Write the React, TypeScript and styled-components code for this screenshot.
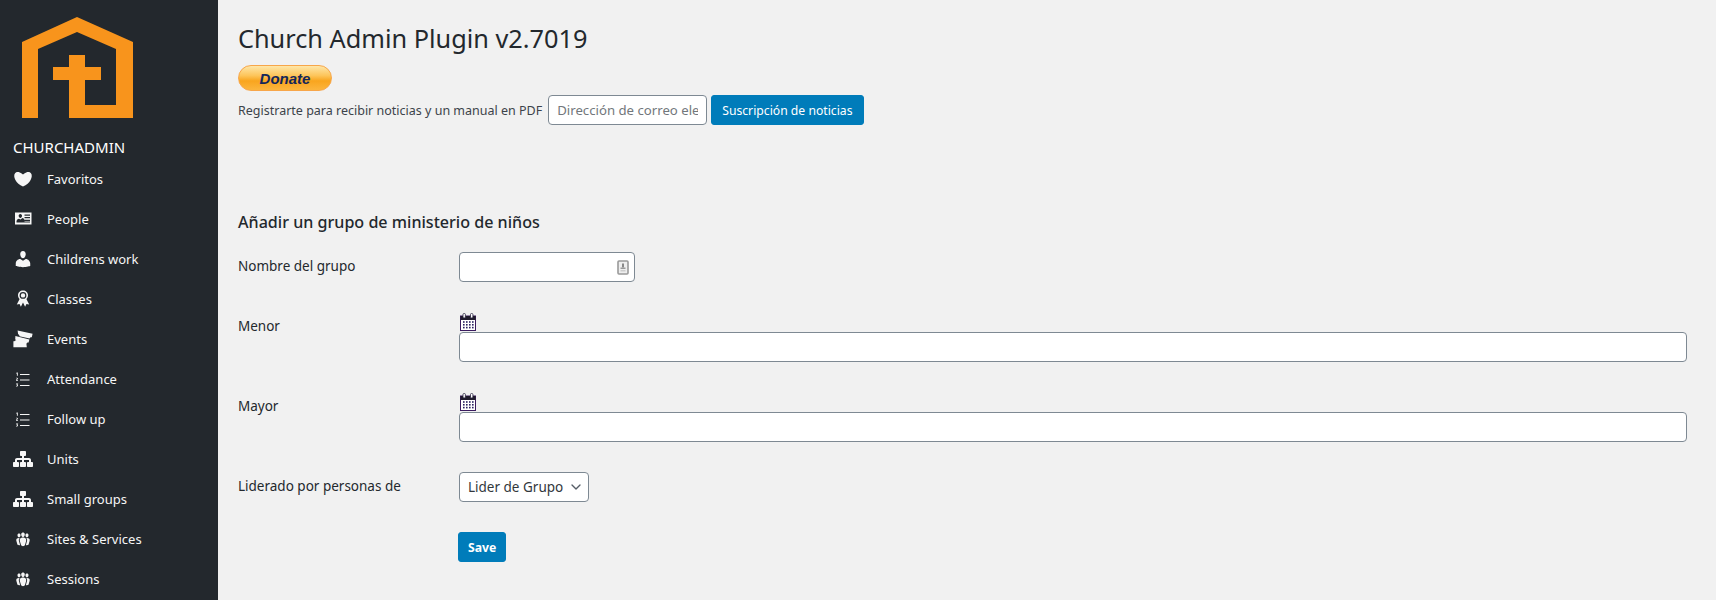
import * as React from "react";
import styled, { createGlobalStyle } from "styled-components";
import { ChevronDown } from "lucide-react";

const GlobalStyle = createGlobalStyle`
  html, body {
    margin: 0;
    height: 600px;
    overflow: hidden;
    background: #f1f1f1;
    font-family: "Noto Sans", "Open Sans", sans-serif;
    color: #23282d;
  }
`;

const Page = styled.div`
  display: flex;
  width: 1716px;
  height: 600px;
  overflow: hidden;
`;

const Sidebar = styled.nav`
  flex: 0 0 218px;
  background: #23282d;
  color: #fff;
  padding-top: 17px;
  box-sizing: border-box;
`;

const Logo = styled.svg`
  display: block;
  width: 111px;
  height: 101px;
  margin-left: 22px;
`;

const Brand = styled.div`
  margin: 19px 0 2px 13px;
  font-size: 15px;
  line-height: 20px;
`;

const Menu = styled.ul`
  list-style: none;
  margin: 0;
  padding: 0;
`;

const MenuItem = styled.li`
  display: flex;
  align-items: center;
  gap: 14px;
  height: 40px;
  padding-left: 13px;
  font-size: 13px;
  color: #f6f6f6;
`;

const MenuIcon = styled.svg`
  flex: 0 0 20px;
  width: 20px;
  height: 20px;
  fill: #f6f6f6;
`;

const Main = styled.main`
  flex: 1;
  padding: 20px 29px 0 20px;
  min-width: 0;
`;

const Title = styled.h1`
  margin: 0 0 9px;
  font-size: 25.3px;
  font-weight: 400;
  line-height: 36px;
`;

const Donate = styled.button`
  display: block;
  width: 94px;
  height: 26px;
  padding: 0;
  border: 1px solid #f7a64a;
  border-radius: 13px;
  background: linear-gradient(#fee6a8 0%, #fdc55a 40%, #f9a51e 62%, #fcb53e 100%);
  color: #14275a;
  font-family: "Liberation Sans", Arial, sans-serif;
  font-size: 15px;
  font-style: italic;
  font-weight: 700;
`;

const Newsletter = styled.div`
  display: flex;
  align-items: center;
  gap: 4px;
  margin-top: 4px;
  font-size: 12.5px;
  color: #3c434a;
`;

const baseField = `
  box-sizing: border-box;
  height: 30px;
  border: 1px solid #7e8993;
  border-radius: 4px;
  background: #fff;
  font-family: inherit;
  font-size: 13.5px;
  color: #32373c;
`;

const EmailInput = styled.input`
  ${baseField}
  width: 159px;
  padding: 0 8px;
  margin-left: 2px;
  font-size: 13.2px;
  &::placeholder {
    color: #72777c;
    opacity: 1;
  }
`;

const PrimaryButton = styled.button<{ $bold?: boolean }>`
  height: 30px;
  padding: 0 ${(p) => (p.$bold ? 9 : 10)}px;
  border: 1px solid #007cba;
  border-radius: 3px;
  background: #007cba;
  color: #fff;
  font-family: inherit;
  font-size: 12.2px;
  font-weight: ${(p) => (p.$bold ? 700 : 400)};
`;

const Heading = styled.h2`
  margin: 87px 0 20px;
  font-size: 16.1px;
  font-weight: 500;
  line-height: 20px;
`;

const Row = styled.div`
  display: grid;
  grid-template-columns: 221px 1fr;
  align-items: start;
  margin-bottom: 30px;
`;

const Label = styled.label`
  padding-top: 4px;
  font-size: 13.5px;
  line-height: 20px;
`;

const FieldWrap = styled.div<{ $width?: number }>`
  position: relative;
  width: ${(p) => (p.$width ? `${p.$width}px` : "100%")};
`;

const TextInput = styled.input`
  ${baseField}
  display: block;
  width: 100%;
  padding: 0 8px;
`;

const KeyIcon = styled.svg`
  position: absolute;
  top: 8px;
  right: 6px;
  width: 12px;
  height: 15px;
`;

const CalendarBox = styled.div`
  height: 20px;
  padding-top: 1px;
  box-sizing: border-box;
`;

const Calendar = styled.svg`
  display: block;
  width: 17px;
  height: 18px;
  margin-left: 1px;
`;

const Select = styled.select`
  ${baseField}
  display: block;
  width: 130px;
  padding: 0 20px 0 8px;
  appearance: none;
`;

const Chevron = styled(ChevronDown)`
  position: absolute;
  top: 7px;
  right: 5px;
  width: 16px;
  height: 16px;
  color: #555d66;
  pointer-events: none;
`;

const SaveWrap = styled.div`
  margin-left: -1px;
`;

const paths: Record<string, React.ReactNode> = {
  heart: (
    <path d="M10 17.6c3.6-1.5 6.2-4 7.6-6.6 1.4-2.6 1.6-5.2.35-6.8-1.1-1.4-2.95-1.55-4.7-.8-1 .4-2.05 1.1-3.25 2.1-1.2-1-2.25-1.7-3.25-2.1-1.75-.75-3.6-.6-4.7.8C.8 5.8 1 8.4 2.4 11c1.4 2.6 4 5.1 7.6 6.6z" />
  ),
  id: (
    <path
      fillRule="evenodd"
      d="M2 3.5h16.5v12H2zM11.5 5.5v1.2H17V5.5zm0 2.6v1.2H17V8.1zm0 2.6v1.2H17v-1.2zm-8 2.9H17v-1.2h-5.5v-1c0-1.3-1-2.3-2.1-2.5L7.5 10.4 6 9.7c-1.2.2-2.5 1.2-2.5 2.6zM7.3 5c-1.1 0-1.8 1-1.6 2 .1.9.8 1.9 1.7 1.9s1.5-1 1.6-1.9C9.2 6 8.4 5 7.3 5z"
    />
  ),
  user: (
    <path d="M10 9.25c-2.27 0-2.73-3.44-2.73-3.44C7 4.02 7.82 2 9.97 2c2.16 0 2.98 2.02 2.71 3.81 0 0-.41 3.44-2.68 3.44zm0 2.57L12.72 10c2.39 0 4.52 2.33 4.52 4.53v2.49s-3.65 1.13-7.24 1.13c-3.65 0-7.24-1.13-7.24-1.13v-2.49c0-2.25 1.94-4.48 4.47-4.48z" />
  ),
  award: (
    <path
      fillRule="evenodd"
      d="M10 1.5c2.9 0 5 2.1 5 4.8 0 1.5-.6 2.8-1.6 3.7l2.8 5.6-2.7-.5-1.4 2.6-2.1-4.2-2.1 4.2-1.4-2.6-2.7.5L6.6 10C5.6 9.1 5 7.8 5 6.3c0-2.7 2.1-4.8 5-4.8zm0 1.5a3.4 3.4 0 1 0 0 6.8A3.4 3.4 0 0 0 10 3zm0 1.2a2.2 2.2 0 1 1 0 4.4 2.2 2.2 0 0 1 0-4.4z"
    />
  ),
  tickets: (
    <path d="M4.6 1.4l15 3.3-.8 3.6c-1-.2-1.9.3-2.2 1.2L6.4 7.2c.1-.9-.3-1.7-1.3-2zM2.4 7l14 3.6-.8 3c-1-.2-1.8.3-2.1 1.2L3.4 12.6c.2-.9-.3-1.7-1.2-2zM.4 12.2c.9.1 1.7-.2 2-1l11 3.6.4 3.4H.4z" />
  ),
  list: (
    <path d="M3.8 3.6h1v3.2h-.9V4.5l-.6.3v-.7zM3 9.1c.3-.5 1.9-.7 2 .4 0 .8-.8 1-1.1 1.5H5v.7H3V11c.3-.6 1.2-1 1.1-1.5-.1-.4-.7-.2-1 .1zM3.1 14.5h2v.6l-.7.6c.9.1 1 1.9-.5 1.9-.4 0-.7-.1-1-.3l.2-.6c.4.3 1.1.3 1.1-.1 0-.3-.3-.4-.8-.4v-.6l.6-.5h-.9zM7 5h9.5v1H7zM7 10.6h9.5v1H7zM7 16h9.5v1H7z" />
  ),
  network: (
    <path d="M18 13h1c.55 0 1 .45 1 1.01v2.98c0 .56-.45 1.01-1 1.01h-4c-.55 0-1-.45-1-1.01v-2.98c0-.56.45-1.01 1-1.01h1v-2h-5v2h1c.55 0 1 .45 1 1.01v2.98c0 .56-.45 1.01-1 1.01H8c-.55 0-1-.45-1-1.01v-2.98c0-.56.45-1.01 1-1.01h1v-2H4v2h1c.55 0 1 .45 1 1.01v2.98C6 17.55 5.55 18 5 18H1c-.55 0-1-.45-1-1.01v-2.98C0 13.45.45 13 1 13h1v-2c0-1.1.9-2 2-2h5V7H8c-.55 0-1-.45-1-1.01V3.02C7 2.46 7.45 2 8 2h4c.55 0 1 .46 1 1.02v2.97c0 .56-.45 1.01-1 1.01h-1v2h5c1.1 0 2 .9 2 2v2z" />
  ),
  groups: (
    <path
      transform="translate(1 1) scale(0.9)"
      d="M8.03 4.46c-.29 1.28.55 3.46 1.97 3.46 1.41 0 2.25-2.18 1.96-3.46-.22-.98-1.08-1.62-1.96-1.62-.89 0-1.74.64-1.97 1.62zm-4.13.9c-.25 1.08.47 2.92 1.67 2.92 1.2 0 1.92-1.84 1.67-2.92-.19-.83-.92-1.37-1.67-1.37s-1.48.54-1.67 1.37zm8.86 0c-.25 1.08.47 2.92 1.66 2.92 1.2 0 1.92-1.84 1.67-2.92-.19-.83-.92-1.37-1.67-1.37-.74 0-1.47.54-1.66 1.37zm-.59 11.43l1.25-4.3C14.2 10 12.71 8.47 10 8.47c-2.72 0-4.21 1.53-3.44 4.02l1.26 4.3C8.05 17.51 9 18 10 18c.98 0 1.94-.49 2.17-1.21zm-6.1-7.63c-.49.67-.96 1.83-.42 3.59l1.12 3.79c-.34.2-.77.31-1.2.31-.85 0-1.65-.41-1.85-1.03l-1.07-3.65c-.65-2.11.61-3.4 2.92-3.4.27 0 .54.02.79.06-.1.1-.2.22-.29.33zm8.35-.39c2.31 0 3.58 1.29 2.92 3.4l-1.07 3.65c-.2.62-1 1.03-1.85 1.03-.43 0-.86-.11-1.2-.31l1.11-3.77c.55-1.78.08-2.94-.42-3.61-.08-.11-.18-.23-.28-.33.25-.04.51-.06.79-.06z"
    />
  ),
};

const menu = [
  { label: "Favoritos", icon: "heart" },
  { label: "People", icon: "id" },
  { label: "Childrens work", icon: "user" },
  { label: "Classes", icon: "award" },
  { label: "Events", icon: "tickets" },
  { label: "Attendance", icon: "list" },
  { label: "Follow up", icon: "list" },
  { label: "Units", icon: "network" },
  { label: "Small groups", icon: "network" },
  { label: "Sites & Services", icon: "groups" },
  { label: "Sessions", icon: "groups" },
];

const CalendarIcon = () => (
  <CalendarBox>
    <Calendar viewBox="0 0 17 18">
      <rect x="0.5" y="3" width="15" height="14.5" fill="#fff" stroke="#3a1a5e" />
      <rect x="0.5" y="3" width="15" height="4" fill="#1f1b2b" />
      <rect x="3" y="0.5" width="2.4" height="4.5" rx="1" fill="#fff" stroke="#2b2440" strokeWidth="0.8" />
      <rect x="10.5" y="0.5" width="2.4" height="4.5" rx="1" fill="#fff" stroke="#2b2440" strokeWidth="0.8" />
      {[8.2, 11, 13.8].map((y) =>
        [3, 6, 9, 12].map((x) => (
          <rect key={`${x}-${y}`} x={x} y={y} width="1.6" height="1.6" fill="#2a2160" />
        ))
      )}
    </Calendar>
  </CalendarBox>
);

export default function App() {
  return (
    <Page>
      <GlobalStyle />
      <Sidebar>
        <Logo viewBox="22 17 111 101">
          <path
            fill="#f8941c"
            d="M77 17L133 42V118H69V80H53V67H69V55H85V67H101V80H85V105H116V49L77 32L38 49V118H22V42Z"
          />
        </Logo>
        <Brand>CHURCHADMIN</Brand>
        <Menu>
          {menu.map((item) => (
            <MenuItem key={item.label}>
              <MenuIcon viewBox="0 0 20 20">{paths[item.icon]}</MenuIcon>
              {item.label}
            </MenuItem>
          ))}
        </Menu>
      </Sidebar>
      <Main>
        <Title>Church Admin Plugin v2.7019</Title>
        <Donate type="button">Donate</Donate>
        <Newsletter>
          <span>Registrarte para recibir noticias y un manual en PDF</span>
          <EmailInput placeholder="Dirección de correo electrónico" />
          <PrimaryButton type="button">Suscripción de noticias</PrimaryButton>
        </Newsletter>
        <Heading>Añadir un grupo de ministerio de niños</Heading>
        <Row>
          <Label>Nombre del grupo</Label>
          <FieldWrap $width={176}>
            <TextInput />
            <KeyIcon viewBox="0 0 12 15">
              <rect x="1" y="1" width="10" height="13" rx="1" fill="#eee" stroke="#999" strokeWidth="1.6" />
              <rect x="5" y="3.5" width="2" height="4" fill="#888" />
              <rect x="3.5" y="7.5" width="5" height="1.5" fill="#999" />
              <rect x="3.5" y="10" width="5" height="1.5" fill="#ccc" />
            </KeyIcon>
          </FieldWrap>
        </Row>
        <Row>
          <Label>Menor</Label>
          <div>
            <CalendarIcon />
            <TextInput />
          </div>
        </Row>
        <Row>
          <Label>Mayor</Label>
          <div>
            <CalendarIcon />
            <TextInput />
          </div>
        </Row>
        <Row>
          <Label>Liderado por personas de</Label>
          <FieldWrap $width={130}>
            <Select defaultValue="lider">
              <option value="lider">Lider de Grupo</option>
            </Select>
            <Chevron />
          </FieldWrap>
        </Row>
        <Row>
          <span />
          <SaveWrap>
            <PrimaryButton type="button" $bold>
              Save
            </PrimaryButton>
          </SaveWrap>
        </Row>
      </Main>
    </Page>
  );
}
